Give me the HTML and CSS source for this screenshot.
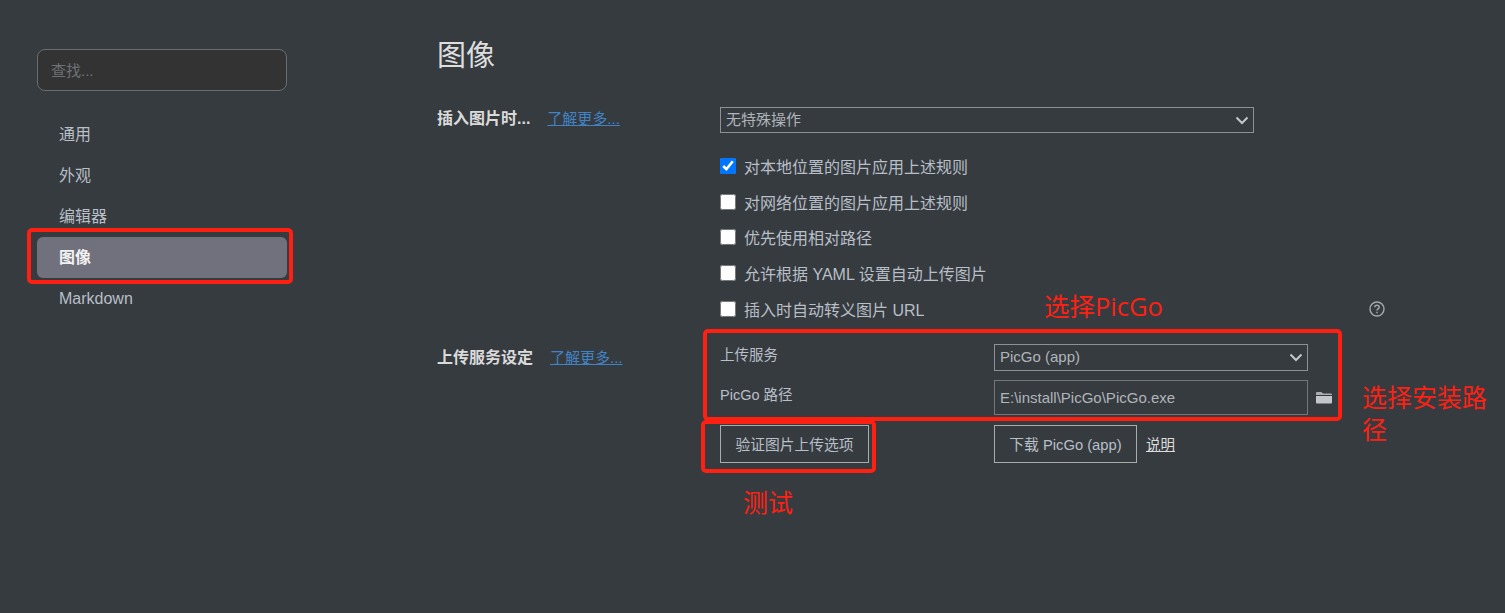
FILE: index.html
```html
<!DOCTYPE html>
<html lang="zh-CN">
<head>
    <meta charset="UTF-8">
    <title>图像</title>
    <link rel="stylesheet" href="styles.css">
</head>
<body>
    <div class="sidebar">
        <input type="text" class="search" placeholder="查找...">
        <div class="nav">
            <div class="nav-item">通用</div>
            <div class="nav-item">外观</div>
            <div class="nav-item">编辑器</div>
            <div class="nav-item active">图像</div>
            <div class="nav-item">Markdown</div>
        </div>
    </div>

    <div class="content">
        <h1 class="title">图像</h1>

        <div class="section">
            <div class="section-label"><b>插入图片时...</b><a class="more">了解更多...</a></div>
            <div class="section-body">
                <div class="select-wrap insert-select">
                    <select class="select"><option>无特殊操作</option></select>
                    <svg class="chevron" width="14" height="9" viewBox="0 0 14 9" fill="none" stroke="#c4c8cb" stroke-width="2"><path d="M1.500 1.500 7 7l5.500-5.500"/></svg>
                </div>
                <div class="checks">
                    <label class="check"><input type="checkbox" checked>对本地位置的图片应用上述规则</label>
                    <label class="check"><input type="checkbox">对网络位置的图片应用上述规则</label>
                    <label class="check"><input type="checkbox">优先使用相对路径</label>
                    <label class="check"><input type="checkbox">允许根据 YAML 设置自动上传图片</label>
                    <label class="check"><input type="checkbox">插入时自动转义图片 URL
                        <svg class="help" width="16" height="16" viewBox="0 0 16 16" fill="none" stroke="#a4a9ad" stroke-width="1.4">
                            <circle cx="8" cy="8" r="7"/>
                            <path d="M5.800 6.300c0-1.300 1-2.100 2.200-2.100s2.200.8 2.200 2c0 1.700-2.200 1.700-2.200 3.400"/>
                            <path d="M8 10.800v1.500"/>
                        </svg>
                    </label>
                </div>
            </div>
        </div>

        <div class="section upload">
            <div class="section-label"><b>上传服务设定</b><a class="more">了解更多...</a></div>
            <div class="upload-grid">
                <div class="field-name">上传服务</div>
                <div class="select-wrap service-select">
                    <select class="select"><option>PicGo (app)</option></select>
                    <svg class="chevron" width="14" height="9" viewBox="0 0 14 9" fill="none" stroke="#c4c8cb" stroke-width="2"><path d="M1.500 1.500 7 7l5.500-5.500"/></svg>
                </div>
                <div class="field-name">PicGo 路径</div>
                <div class="path-row">
                    <input type="text" class="path" value="E:\install\PicGo\PicGo.exe">
                    <svg class="folder" width="16" height="13" viewBox="0 0 16 13">
                        <path fill="#a9aeb2" d="M0 2a1 1 0 0 1 1-1h4.500l1.500 1.500h8a1 1 0 0 1 1 1V4H0z"/>
                        <path fill="#c3c7ca" d="M0 5h16v6.500a1 1 0 0 1-1 1H1a1 1 0 0 1-1-1z"/>
                    </svg>
                </div>
                <div><button class="btn verify">验证图片上传选项</button></div>
                <div class="download-row">
                    <button class="btn download">下载 PicGo (app)</button>
                    <a class="explain">说明</a>
                </div>
            </div>
        </div>
    </div>

    <!-- 标注 -->
    <div class="mark mark-nav"></div>
    <div class="mark mark-service"></div>
    <div class="mark mark-verify"></div>
    <div class="note note-picgo">选择PicGo</div>
    <div class="note note-path">选择安装路径</div>
    <div class="note note-test">测试</div>
</body>
</html>
```

FILE: styles.css
```css
/* 通用 */
html, body {
    height: 100%;
}

body {
    margin: 0;
    background: #363b40;
    color: #b8bfc6;
    font-family: "Liberation Sans", "Noto Sans CJK SC", sans-serif;
    font-size: 15px;
    display: flex;
    overflow: hidden;
    position: relative;
}

/* 侧边栏 */
.sidebar {
    width: 250px;
    margin-left: 37px;
    padding-top: 49px;
    flex-shrink: 0;
}

.search {
    display: block;
    box-sizing: border-box;
    width: 250px;
    height: 42px;
    padding: 0 13px;
    background: #333333;
    border: 1px solid #6a6d70;
    border-radius: 8px;
    font: inherit;
    color: #b8bfc6;
}

.search::placeholder {
    color: #6f7275;
    opacity: 1;
}

.nav {
    margin-top: 23px;
}

.nav-item {
    height: 41px;
    line-height: 41px;
    padding-left: 22px;
    border-radius: 6px;
    font-size: 16px;
}

.nav-item.active {
    background: #71717d;
    color: #f2f2f2;
    font-weight: bold;
}

/* 内容 */
.content {
    margin-left: 150px;
    padding-top: 36px;
    width: 960px;
}

.title {
    margin: 0;
    font-size: 29px;
    font-weight: normal;
    line-height: 40px;
    color: #dedede;
}

.section {
    display: flex;
    margin-top: 31px;
}

.section-label {
    width: 283px;
    flex-shrink: 0;
    padding-top: 1px;
    line-height: 22px;
    white-space: nowrap;
}

.section-label b {
    color: #dadada;
    font-size: 16px;
}

.more {
    margin-left: 17px;
    color: #4183c4;
    font-size: 15px;
    text-decoration: underline;
}

.section-body {
    width: 665px;
}

.select-wrap {
    position: relative;
}

.select {
    display: block;
    box-sizing: border-box;
    width: 100%;
    height: 100%;
    appearance: none;
    background: #363b40;
    color: #b0b5ba;
    border: 1px solid #8d9094;
    font: inherit;
    border-radius: 0;
    padding: 0 0 1px 5px;
}

.chevron {
    position: absolute;
    right: 5px;
    top: 9px;
    pointer-events: none;
}

.insert-select {
    width: 534px;
    height: 26px;
}

.checks {
    margin-top: 15px;
}

.check {
    display: flex;
    align-items: center;
    height: 35.750px;
    font-size: 16px;
}

.check input {
    width: 16px;
    height: 16px;
    margin: 0 8px 0 0;
    accent-color: #0075ff;
}

.help {
    margin-left: auto;
}

/* 上传服务 */
.upload {
    margin-top: 17px;
}

.upload-grid {
    display: grid;
    grid-template-columns: 274px 348px;
    grid-template-rows: 27px 36px 38px;
    row-gap: 9px;
    align-items: center;
}

.upload .section-label {
    padding-top: 3px;
}

.field-name {
    font-size: 14.500px;
    padding-bottom: 8px;
}

.service-select {
    width: 314px;
    height: 27px;
}

.path-row {
    display: flex;
    align-items: center;
    align-self: start;
}

.path {
    box-sizing: border-box;
    width: 314px;
    height: 35px;
    padding: 0 5px;
    background: #363b40;
    border: 1px solid #73767a;
    color: #b0b5ba;
    font: inherit;
}

.folder {
    margin-left: 8px;
}

.btn {
    box-sizing: border-box;
    height: 38px;
    background: transparent;
    border: 1px solid #a9acaf;
    color: #b8bfc6;
    font: inherit;
    font-size: 14.750px;
    padding: 0;
}

.verify {
    display: block;
    width: 149px;
}

.download {
    width: 143px;
}

.download-row {
    display: flex;
    align-items: center;
}

.explain {
    margin-left: 9px;
    color: #dddddd;
    font-size: 14.500px;
    text-decoration: underline;
}

/* 红色标注 */
.mark {
    position: absolute;
    box-sizing: border-box;
    border: 4px solid #ff2012;
    border-radius: 5px;
}

.mark-nav {
    left: 27px;
    top: 228px;
    width: 266px;
    height: 56px;
}

.mark-service {
    left: 703px;
    top: 329px;
    width: 639px;
    height: 92px;
}

.mark-verify {
    left: 701px;
    top: 420px;
    width: 175px;
    height: 53px;
}

.note {
    position: absolute;
    color: #ff2012;
    font-family: "Open Sans", "Noto Sans CJK SC", sans-serif;
    font-size: 25px;
    line-height: 32px;
}

.note-picgo {
    left: 1044px;
    top: 290px;
    font-size: 25.500px;
}

.note-path {
    left: 1362px;
    top: 381px;
    width: 130px;
}

.note-test {
    left: 743px;
    top: 486px;
}
```
